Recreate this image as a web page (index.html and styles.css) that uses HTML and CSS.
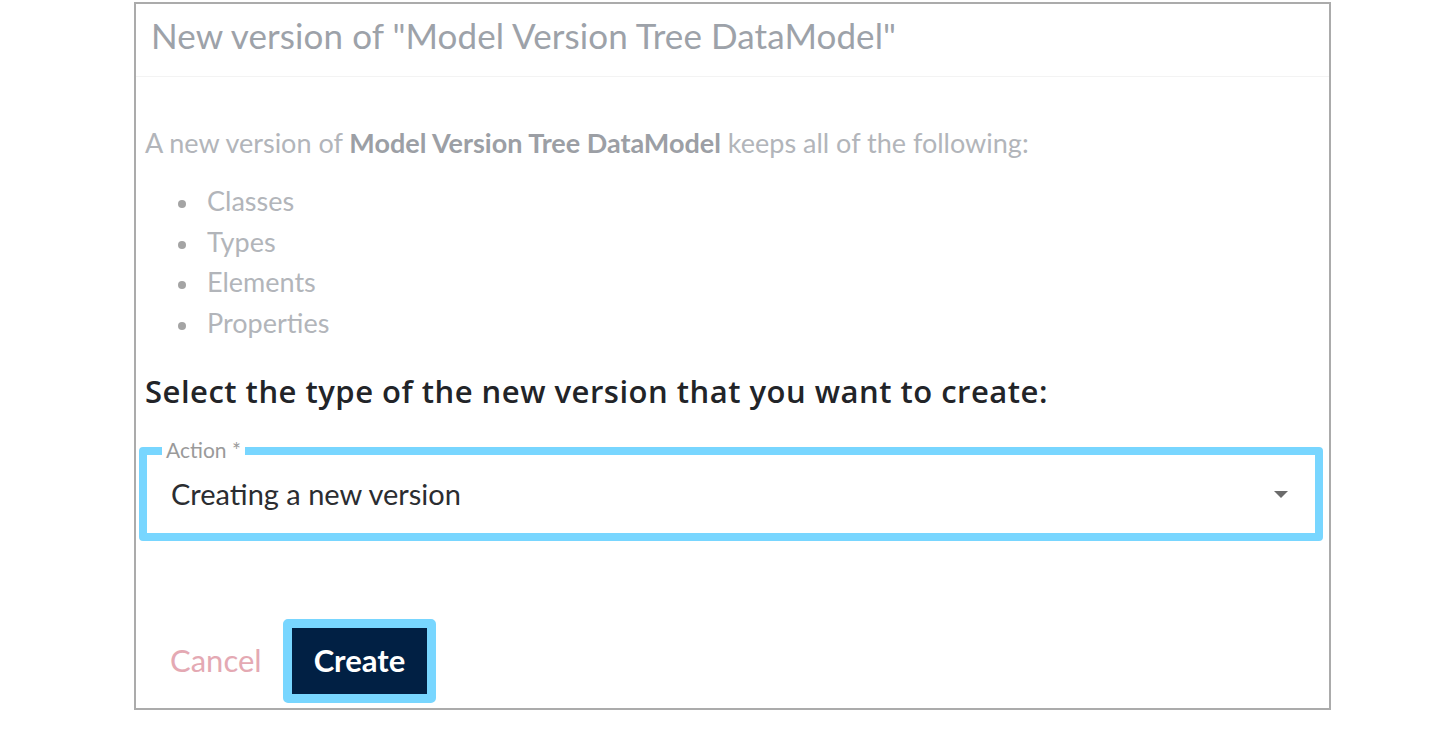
FILE: index.html
```html
<!DOCTYPE html>
<html lang="en">
<head>
<meta charset="utf-8">
<title>New version</title>
<link rel="stylesheet" href="styles.css">
</head>
<body>
<div class="dialog">
  <div class="dialog-header">
    <h1 class="dialog-title">New version of "Model Version Tree DataModel"</h1>
  </div>
  <div class="dialog-content">
    <p class="intro">A new version of <strong>Model Version Tree DataModel</strong> keeps all of the following:</p>
    <ul class="keep-list">
      <li>Classes</li>
      <li>Types</li>
      <li>Elements</li>
      <li>Properties</li>
    </ul>
    <h2 class="select-heading">Select the type of the new version that you want to create:</h2>
    <div class="select-box">
      <span class="select-label">Action *</span>
      <span class="select-value">Creating a new version</span>
      <svg class="select-arrow" width="14" height="7" viewBox="0 0 14 7"><path d="M0 0 L14 0 L7 7 Z" fill="#6b6b6b"/></svg>
    </div>
  </div>
  <div class="dialog-actions">
    <button class="btn-cancel">Cancel</button>
    <button class="btn-create">Create</button>
  </div>
</div>
</body>
</html>
```
FILE: styles.css
```css
html, body {
  margin: 0;
  padding: 0;
  background: #ffffff;
}

body {
  font-family: Lato, "Noto Sans", "Liberation Sans", sans-serif;
}

.dialog {
  box-sizing: border-box;
  margin: 2px 0 0 134px;
  width: 1197px;
  height: 708px;
  border: 2px solid #ababab;
  display: flex;
  flex-direction: column;
  background: #fff;
}

.dialog-header {
  box-sizing: border-box;
  height: 73px;
  padding: 10px 0 0 15px;
  border-bottom: 1px solid #f3f3f3;
}

.dialog-title {
  margin: 0;
  font-size: 35px;
  line-height: 42px;
  font-weight: 400;
  color: #9da2a9;
  letter-spacing: 0.1px;
}

.dialog-content {
  padding: 50px 6px 0 9px;
}

.intro {
  margin: 0;
  font-size: 27px;
  line-height: 32px;
  color: #b2b5ba;
}

.intro strong {
  font-weight: 700;
  color: #9c9fa5;
}

.keep-list {
  list-style: none;
  margin: 22px 0 0 0;
  padding: 0 0 0 33px;
  font-size: 27px;
  line-height: 40.6px;
  color: #b2b5ba;
}

.keep-list li::before {
  content: "";
  display: inline-block;
  width: 8px;
  height: 8px;
  border-radius: 50%;
  background: #a4a4a4;
  vertical-align: middle;
  margin-right: 21px;
}

.select-heading {
  margin: 30px 0 0 0;
  font-family: "Open Sans", Lato, sans-serif;
  font-size: 31px;
  line-height: 36px;
  font-weight: 600;
  letter-spacing: 0.5px;
  color: #222428;
}

.select-box {
  position: relative;
  box-sizing: border-box;
  margin: 38px 0 0 -6px;
  height: 94px;
  border: 8px solid #78d6ff;
  border-radius: 4px;
  display: flex;
  align-items: center;
  padding: 0 27px 0 24px;
}

.select-label {
  position: absolute;
  left: 15px;
  top: -16px;
  padding: 0 4px;
  background: #fff;
  font-size: 21px;
  line-height: 21px;
  color: #9a9a9a;
}

.select-value {
  flex: 1;
  font-size: 29px;
  line-height: 34px;
  color: #2b2d31;
}

.select-arrow {
  display: block;
}

.dialog-actions {
  margin-top: auto;
  padding: 0 0 5px 22px;
  display: flex;
  align-items: center;
  gap: 9px;
}

.btn-cancel {
  font-family: inherit;
  font-size: 31px;
  color: #e4a9b3;
  background: none;
  border: none;
  padding: 0 12px 3px;
  height: 84px;
}

.btn-create {
  box-sizing: border-box;
  font-family: inherit;
  font-size: 31px;
  font-weight: 700;
  color: #ffffff;
  background: #012044;
  border: 9px solid #78d6ff;
  border-radius: 5px;
  height: 84px;
  padding: 0 22px 3px;
}
```
